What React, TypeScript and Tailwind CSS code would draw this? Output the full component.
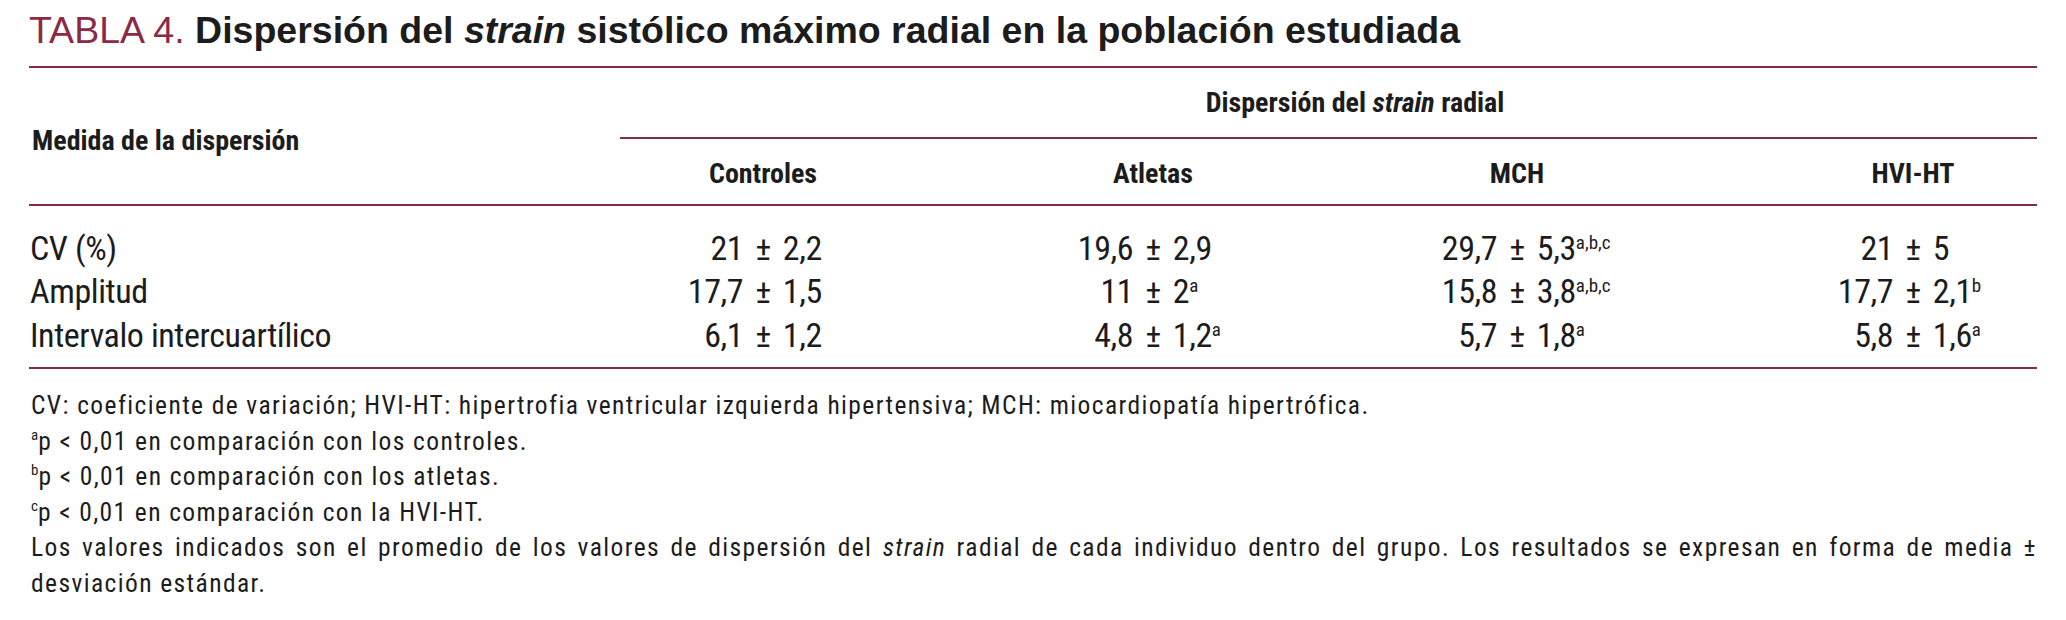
import React from "react";

const cols = ["Controles", "Atletas", "MCH", "HVI-HT"];
const pads = ["pr-[52px]", "pl-[13px]", "pr-[16px]", "pl-[74px]"];

type Cell = [string, string, string?];
const rows: [string, Cell[]][] = [
  ["CV (%)", [["21", "2,2"], ["19,6", "2,9"], ["29,7", "5,3", "a,b,c"], ["21", "5"]]],
  ["Amplitud", [["17,7", "1,5"], ["11", "2", "a"], ["15,8", "3,8", "a,b,c"], ["17,7", "2,1", "b"]]],
  [
    "Intervalo intercuartílico",
    [["6,1", "1,2"], ["4,8", "1,2", "a"], ["5,7", "1,8", "a"], ["5,8", "1,6", "a"]],
  ],
];

function FSup({ children }: { children: React.ReactNode }) {
  return (
    <span className="relative top-[-10px] align-baseline text-[15px] tracking-normal leading-none">
      {children}
    </span>
  );
}

export default function App() {
  return (
    <div className="w-[2066px] h-[620px] bg-white px-[29px] text-[#1c1c1c] font-['Roboto_Condensed','Liberation_Sans',sans-serif]">
      {/* Title */}
      <div className="pt-[10px] text-[37.5px] leading-[41px] whitespace-nowrap font-['Liberation_Sans','Arial',sans-serif]">
        <span className="text-[#8b2a46]">TABLA 4. </span>
        <span className="font-bold">
          Dispersión del <i>strain</i> sistólico máximo radial en la población estudiada
        </span>
      </div>

      {/* Table */}
      <div className="mt-[15px] border-t-2 border-[#7d2f47]">
        {/* Header */}
        <div className="flex border-b-2 border-[#7d2f47] font-bold text-[28px] leading-[32px]">
          <div className="w-[591px] pt-[57px] pl-[3px]">Medida de la dispersión</div>
          <div className="flex-1">
            <div className="h-[69px] flex items-center justify-center pl-[53px]">
              <span>
                Dispersión del <i>strain</i> radial
              </span>
            </div>
            <div className="border-t-2 border-[#7d2f47] grid grid-cols-[338px_377px_380px_322px] h-[67px] items-center pt-[4px]">
              {cols.map((c, i) => (
                <div key={c} className={`text-center ${pads[i]}`}>
                  {c}
                </div>
              ))}
            </div>
          </div>
        </div>

        {/* Body */}
        <div className="border-b-2 border-[#7d2f47] pt-[20.5px] pb-[10px] text-[34px] leading-[43.5px] tracking-[-0.4px]">
          {rows.map(([label, cells]) => (
            <div key={label} className="grid grid-cols-[591px_338px_377px_380px_322px]">
              <div className="pl-[1px]">{label}</div>
              {cells.map(([l, r, s], i) => (
                <div key={i} className={pads[i]}>
                  <div className="grid grid-cols-[1fr_auto_1fr]">
                    <span className="text-right">{l}</span>
                    <span className="px-[12px]">±</span>
                    <span className="text-left whitespace-nowrap">
                      {r}
                      {s && (
                        <span className="relative top-[-11px] align-baseline text-[19px] tracking-normal leading-none">
                          {s}
                        </span>
                      )}
                    </span>
                  </div>
                </div>
              ))}
            </div>
          ))}
        </div>

        {/* Footnotes */}
        <div className="pt-[19px] pl-[2px] text-[25.5px] leading-[35.5px] tracking-[1.4px]">
          <div className="whitespace-nowrap">
            CV: coeficiente de variación; HVI-HT: hipertrofia ventricular izquierda hipertensiva; MCH:
            miocardiopatía hipertrófica.
          </div>
          <div className="whitespace-nowrap">
            <FSup>a</FSup>p &lt; 0,01 en comparación con los controles.
          </div>
          <div className="whitespace-nowrap">
            <FSup>b</FSup>p &lt; 0,01 en comparación con los atletas.
          </div>
          <div className="whitespace-nowrap">
            <FSup>c</FSup>p &lt; 0,01 en comparación con la HVI-HT.
          </div>
          <div className="text-justify [text-align-last:justify]">
            Los valores indicados son el promedio de los valores de dispersión del <i>strain</i> radial
            de cada individuo dentro del grupo. Los resultados se expresan en forma de media ±
          </div>
          <div className="whitespace-nowrap">desviación estándar.</div>
        </div>
      </div>
    </div>
  );
}
